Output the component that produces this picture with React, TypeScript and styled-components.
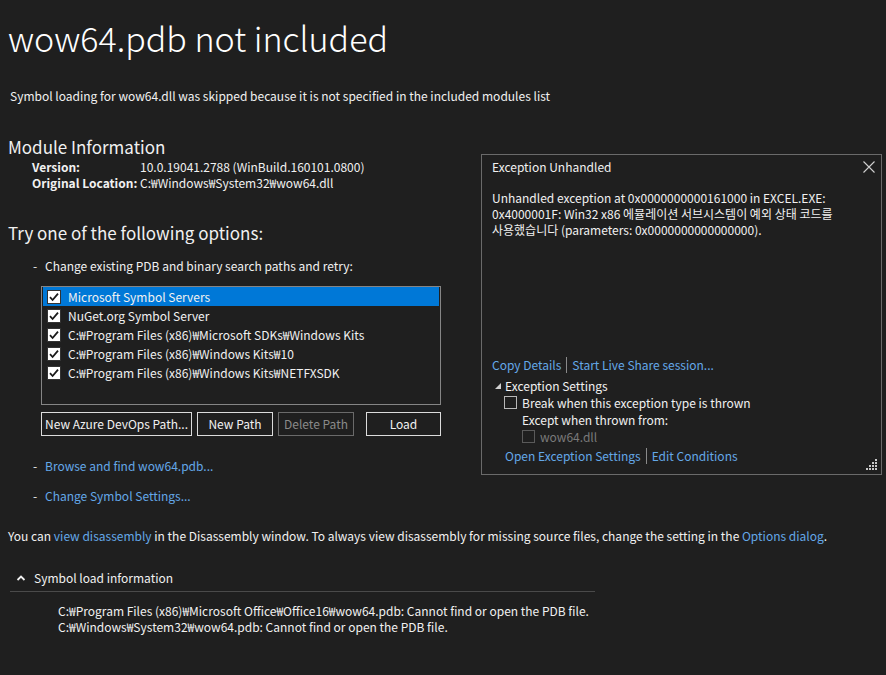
import React from "react";
import styled, { createGlobalStyle } from "styled-components";

const Global = createGlobalStyle`
  html, body { margin: 0; padding: 0; background: #1f1f1f; }
  body {
    font-family: "Noto Sans CJK KR", "Noto Sans", sans-serif;
    color: #f1f1f1;
    font-size: 12px;
    width: 886px;
    height: 675px;
    overflow: hidden;
  }
`;

const Page = styled.div`
  position: relative;
  width: 886px;
  height: 675px;
  box-sizing: border-box;
  padding: 18px 8px 0 8px;
  background: #1f1f1f;
  display: flow-root;
`;

const Title = styled.h1`
  margin: 0;
  font-size: 34px;
  font-weight: 300;
  line-height: 40px;
  color: #ffffff;
`;

const Text = styled.div<{ $mt?: number; $ml?: number }>`
  margin-top: ${(p) => p.$mt ?? 0}px;
  margin-left: ${(p) => p.$ml ?? 0}px;
  line-height: 16px;
  font-size: 12px;
  color: #f1f1f1;
  white-space: nowrap;
`;

const Heading = styled.h2<{ $mt: number }>`
  margin: ${(p) => p.$mt}px 0 0 0;
  font-size: 17px;
  font-weight: 400;
  line-height: 24px;
  color: #f1f1f1;
`;

const InfoGrid = styled.div`
  display: grid;
  grid-template-columns: 108px auto;
  margin-left: 24px;
  line-height: 16px;
`;

const Label = styled.span`
  font-weight: 700;
`;

const Bullet = styled.div<{ $mt: number }>`
  display: flex;
  margin: ${(p) => p.$mt}px 0 0 25px;
  line-height: 16px;
  white-space: nowrap;
`;

const Dash = styled.span`
  width: 12px;
`;

const Link = styled.span`
  color: #64a8e8;
  cursor: pointer;
`;

const ListBox = styled.div`
  margin: 12px 0 0 33px;
  width: 400px;
  height: 119px;
  box-sizing: border-box;
  border: 1px solid #858585;
  padding: 0 1px;
`;

const Row = styled.div<{ $sel?: boolean }>`
  display: flex;
  align-items: center;
  height: 19px;
  padding-left: 4px;
  gap: 7px;
  background: ${(p) => (p.$sel ? "#0078d7" : "transparent")};
  white-space: nowrap;
`;

const CheckBox = styled.span`
  width: 14px;
  height: 14px;
  background: #ffffff;
  box-sizing: border-box;
  border: 1px solid #333;
  display: inline-flex;
  align-items: center;
  justify-content: center;
`;

const Buttons = styled.div`
  display: flex;
  margin: 7px 0 0 33px;
  width: 400px;
`;

const Button = styled.button<{ $w: number; $gap: number; $disabled?: boolean }>`
  width: ${(p) => p.$w}px;
  height: 24px;
  margin-left: ${(p) => p.$gap}px;
  background: transparent;
  border: 1px solid ${(p) => (p.$disabled ? "#6a6a6a" : "#dcdcdc")};
  color: ${(p) => (p.$disabled ? "#8a8a8a" : "#f1f1f1")};
  font-family: inherit;
  font-size: 12px;
  line-height: 16px;
  padding: 0 0 1px 0;
  white-space: nowrap;
`;

const Section = styled.div`
  margin: 26px 0 0 2px;
  width: 585px;
`;

const SectionHead = styled.div`
  display: flex;
  align-items: center;
  line-height: 16px;
  gap: 8px;
  padding-left: 6px;
  padding-bottom: 5px;
  border-bottom: 1px solid #4a4a4a;
`;

const Paths = styled.div`
  margin: 11px 0 0 48px;
  line-height: 16px;
  white-space: nowrap;
`;

/* Popup */
const Popup = styled.div`
  position: absolute;
  left: 481px;
  top: 154px;
  width: 401px;
  height: 321px;
  box-sizing: border-box;
  border: 1px solid #6a6a6a;
  background: #1f1f1f;
  display: flex;
  flex-direction: column;
  padding: 4px 10px 10px 10px;
`;

const PopupTitle = styled.div`
  display: flex;
  justify-content: space-between;
  align-items: center;
  line-height: 16px;
`;

const Close = styled.span`
  display: inline-flex;
  margin-right: -5px;
`;

const Message = styled.div`
  margin-top: 15px;
  line-height: 16px;
  white-space: nowrap;
`;

const Spacer = styled.div`
  flex: 1;
`;

const LinkRow = styled.div<{ $ml?: number; $mt?: number }>`
  display: flex;
  align-items: center;
  margin-left: ${(p) => p.$ml ?? 0}px;
  margin-top: ${(p) => p.$mt ?? 0}px;
  line-height: 16px;
  white-space: nowrap;
`;

const Sep = styled.span`
  width: 1px;
  height: 16px;
  background: #8a8a8a;
  margin: 0 5px;
`;

const SettingsHead = styled.div`
  display: flex;
  align-items: center;
  gap: 3px;
  margin: 5px 0 0 2px;
  line-height: 16px;
`;

const OptRow = styled.div<{ $ml: number; $dim?: boolean }>`
  display: flex;
  align-items: center;
  gap: 5px;
  margin-left: ${(p) => p.$ml}px;
  line-height: 16px;
  height: 17px;
  color: ${(p) => (p.$dim ? "#7a7a7a" : "#f1f1f1")};
  white-space: nowrap;
`;

const EmptyBox = styled.span<{ $dim?: boolean }>`
  width: 13px;
  height: 13px;
  box-sizing: border-box;
  border: 1px solid ${(p) => (p.$dim ? "#5a5a5a" : "#b8b8b8")};
`;

const Grip = styled.svg`
  position: absolute;
  right: 3px;
  bottom: 3px;
`;

const Check = () => (
  <svg width="12" height="12" viewBox="0 0 12 12">
    <path d="M2 6.2 L4.6 9 L10 2.6" stroke="#1a1a1a" strokeWidth="1.8" fill="none" />
  </svg>
);

const paths = [
  "Microsoft Symbol Servers",
  "NuGet.org Symbol Server",
  "C:₩Program Files (x86)₩Microsoft SDKs₩Windows Kits",
  "C:₩Program Files (x86)₩Windows Kits₩10",
  "C:₩Program Files (x86)₩Windows Kits₩NETFXSDK",
];

export default function App() {
  return (
    <Page>
      <Global />
      <Title>wow64.pdb not included</Title>
      <Text $mt={30} $ml={2}>
        Symbol loading for wow64.dll was skipped because it is not specified in the included modules list
      </Text>
      <Heading $mt={31}>Module Information</Heading>
      <InfoGrid>
        <Label>Version:</Label>
        <span>10.0.19041.2788 (WinBuild.160101.0800)</span>
        <Label>Original Location:</Label>
        <span>C:₩Windows₩System32₩wow64.dll</span>
      </InfoGrid>
      <Heading $mt={30}>Try one of the following options:</Heading>
      <Bullet $mt={13}>
        <Dash>-</Dash>
        <span>Change existing PDB and binary search paths and retry:</span>
      </Bullet>
      <ListBox>
        {paths.map((p, i) => (
          <Row key={p} $sel={i === 0}>
            <CheckBox>
              <Check />
            </CheckBox>
            <span>{p}</span>
          </Row>
        ))}
      </ListBox>
      <Buttons>
        <Button $w={151} $gap={0}>New Azure DevOps Path...</Button>
        <Button $w={76} $gap={5}>New Path</Button>
        <Button $w={76} $gap={5} $disabled>Delete Path</Button>
        <Button $w={75} $gap={12}>Load</Button>
      </Buttons>
      <Bullet $mt={22}>
        <Dash>-</Dash>
        <Link>Browse and find wow64.pdb...</Link>
      </Bullet>
      <Bullet $mt={14}>
        <Dash>-</Dash>
        <Link>Change Symbol Settings...</Link>
      </Bullet>
      <Text $mt={24}>
        You can <Link>view disassembly</Link> in the Disassembly window. To always view disassembly for
        missing source files, change the setting in the <Link>Options dialog</Link>.
      </Text>
      <Section>
        <SectionHead>
          <svg width="10" height="8" viewBox="0 0 10 8">
            <path d="M1.5 6 L5 2.5 L8.5 6" stroke="#f1f1f1" strokeWidth="1.8" fill="none" />
          </svg>
          <span>Symbol load information</span>
        </SectionHead>
        <Paths>
          <div>C:₩Program Files (x86)₩Microsoft Office₩Office16₩wow64.pdb: Cannot find or open the PDB file.</div>
          <div>C:₩Windows₩System32₩wow64.pdb: Cannot find or open the PDB file.</div>
        </Paths>
      </Section>

      <Popup>
        <PopupTitle>
          <span>Exception Unhandled</span>
          <Close>
            <svg width="14" height="14" viewBox="0 0 14 14">
              <path d="M1.5 1.5 L12.5 12.5 M12.5 1.5 L1.5 12.5" stroke="#d0d0d0" strokeWidth="1.1" />
            </svg>
          </Close>
        </PopupTitle>
        <Message>
          <div>Unhandled exception at 0x0000000000161000 in EXCEL.EXE:</div>
          <div>0x4000001F: Win32 x86 에뮬레이션 서브시스템이 예외 상태 코드를</div>
          <div>사용했습니다 (parameters: 0x0000000000000000).</div>
        </Message>
        <Spacer />
        <LinkRow>
          <Link>Copy Details</Link>
          <Sep />
          <Link>Start Live Share session...</Link>
        </LinkRow>
        <SettingsHead>
          <svg width="8" height="8" viewBox="0 0 8 8">
            <path d="M7 1 L7 7 L1 7 Z" fill="#d0d0d0" />
          </svg>
          <span>Exception Settings</span>
        </SettingsHead>
        <OptRow $ml={12}>
          <EmptyBox />
          <span>Break when this exception type is thrown</span>
        </OptRow>
        <OptRow $ml={30}>Except when thrown from:</OptRow>
        <OptRow $ml={30} $dim>
          <EmptyBox $dim />
          <span>wow64.dll</span>
        </OptRow>
        <LinkRow $ml={13} $mt={3}>
          <Link>Open Exception Settings</Link>
          <Sep />
          <Link>Edit Conditions</Link>
        </LinkRow>
        <Grip width="12" height="12" viewBox="0 0 12 12">
          {[
            [9, 0], [6, 3], [9, 3], [3, 6], [6, 6], [9, 6], [0, 9], [3, 9], [6, 9], [9, 9],
          ].map(([x, y]) => (
            <rect key={`${x}-${y}`} x={x} y={y} width="2" height="2" fill="#c8c8c8" />
          ))}
        </Grip>
      </Popup>
    </Page>
  );
}
